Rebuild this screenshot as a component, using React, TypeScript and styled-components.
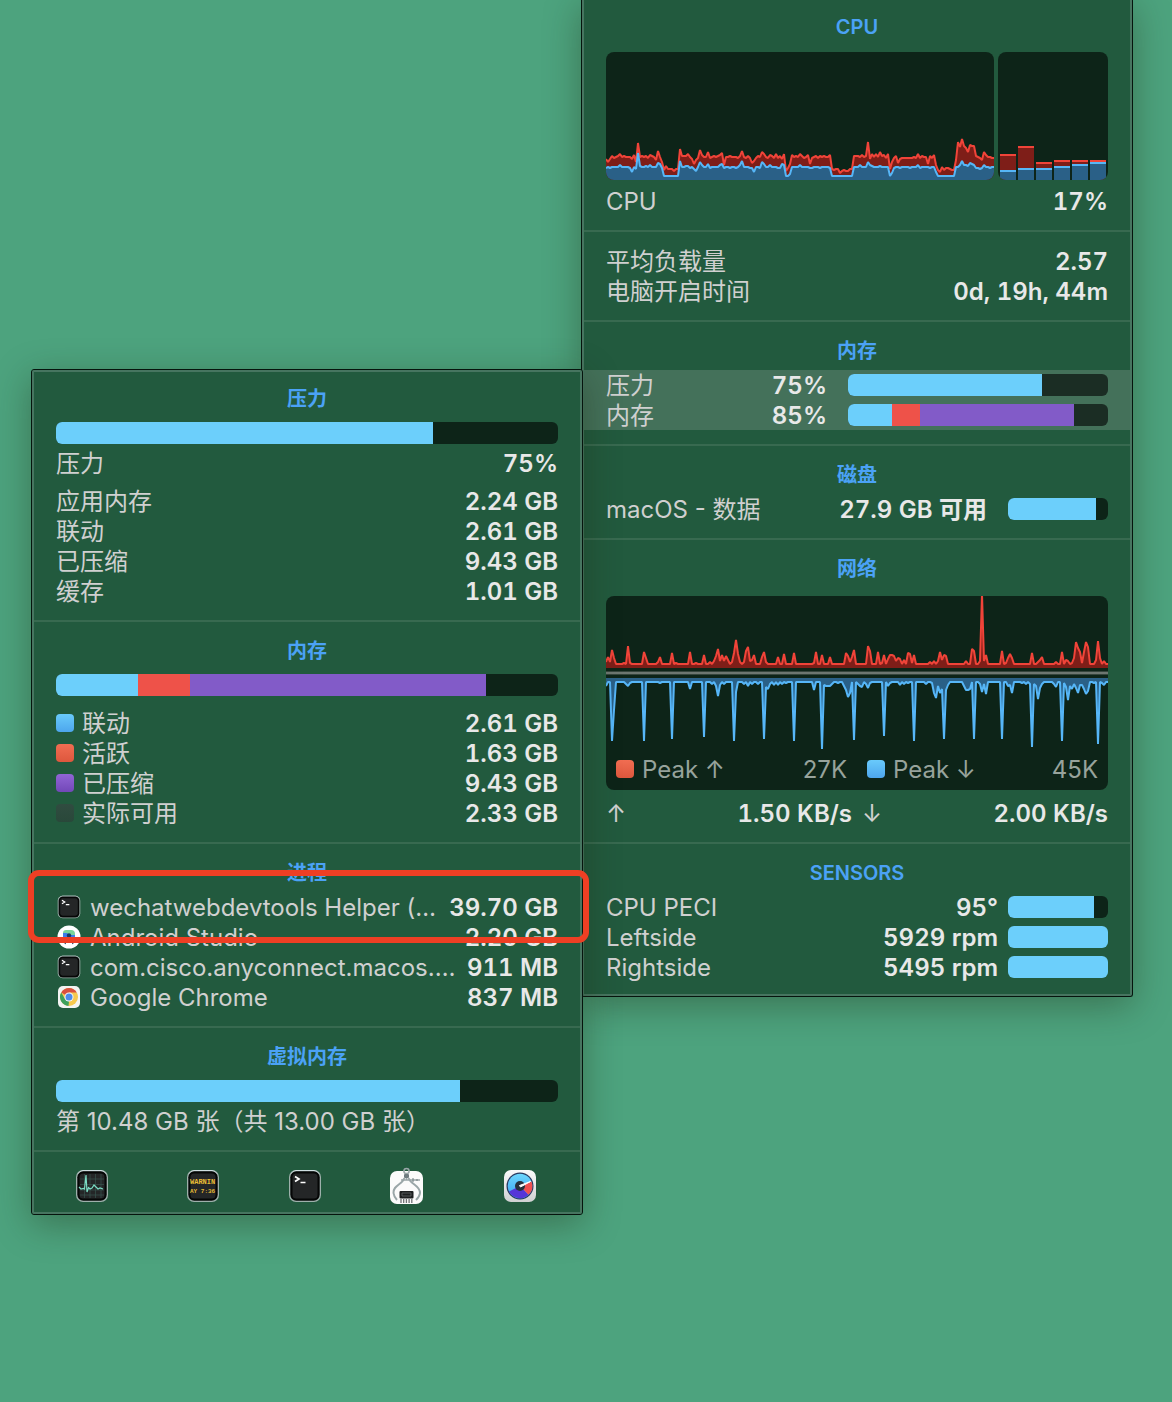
import React from "react";
import styled, { createGlobalStyle } from "styled-components";

const color = {
  desktop: "#4da37e",
  panel: "#225a3e",
  edge: "#477560",
  line: "#386a50",
  well: "rgba(0, 0, 0, 0.6)",
  label: "#d0d0d0",
  value: "#e8e8e8",
  title: "#4ba2f6",
  blue: "#6ccffb",
  red: "#ee5249",
  purple: "#825bc8",
  redLine: "#f04439",
  redFill: "#7e1e18",
  blueLine: "#56b6f7",
  blueFill: "#2a6087",
};

const Global = createGlobalStyle`
  * { box-sizing: border-box; }
  body {
    margin: 0;
    background: ${color.desktop};
    color: ${color.label};
    font: 400 24px/30px Inter, "Noto Sans CJK SC", sans-serif;
  }
`;

const Desktop = styled.main`
  display: flex;
  align-items: flex-start;
  min-height: 100vh;
  padding: 0 31px;
  overflow: hidden;
`;

const Panel = styled.section<{ $docked?: boolean }>`
  position: relative;
  z-index: ${(p) => (p.$docked ? 0 : 1)};
  flex: 0 1 552px;
  min-width: 0;
  margin-top: ${(p) => (p.$docked ? "-2px" : "369px")};
  margin-left: ${(p) => (p.$docked ? "-2px" : "0")};
  border: 1px solid #06140d;
  border-top-width: ${(p) => (p.$docked ? "0" : "1px")};
  border-radius: 3px;
  background: ${color.panel};
  box-shadow: 0 9px 36px rgba(30, 40, 15, 0.38);

  &::after {
    content: "";
    position: absolute;
    inset: 0;
    border: 2px solid ${color.edge};
    border-radius: 2px;
    pointer-events: none;
  }
`;

const Section = styled.section<{ $plain?: boolean }>`
  position: relative;
  padding: ${(p) => (p.$plain ? "14px" : "12px")} 24px 14px;

  & + & {
    border-top: 2px solid ${color.line};
  }
`;

const Title = styled.h2`
  margin: 0 0 4px;
  padding-top: 2px;
  color: ${color.title};
  font-size: 20px;
  font-weight: 600;
  line-height: 30px;
  text-align: center;
`;

const Rows = styled.div<{ $above?: number; $active?: boolean }>`
  margin: ${(p) => p.$above ?? 0}px ${(p) => (p.$active ? "-24px" : "0")} 0;
  padding: 0 ${(p) => (p.$active ? "24px" : "0")};
  background: ${(p) => (p.$active ? "#44715a" : "transparent")};
`;

const Row = styled.div<{ $gap?: number }>`
  display: flex;
  align-items: center;
  gap: ${(p) => p.$gap ?? 8}px;
  height: 30px;
`;

const Name = styled.span`
  flex: 1 1 auto;
  min-width: 0;
  padding-top: 2px;
  overflow: hidden;
  white-space: nowrap;
`;

const Value = styled.span<{ $quiet?: boolean }>`
  flex: none;
  padding-top: 2px;
  color: ${(p) => (p.$quiet ? "inherit" : color.value)};
  font-weight: ${(p) => (p.$quiet ? 400 : 600)};
  font-variant-numeric: ${(p) => (p.$quiet ? "normal" : "tabular-nums")};
  white-space: nowrap;
`;

const Swatch = styled.i<{ $from: string; $to: string }>`
  flex: none;
  width: 18px;
  height: 18px;
  border-radius: 4px;
  background: linear-gradient(${(p) => p.$from}, ${(p) => p.$to});
`;

const Track = styled.div<{ $width?: number }>`
  display: flex;
  flex: none;
  width: ${(p) => (p.$width ? `${p.$width}px` : "100%")};
  height: 22px;
  margin: ${(p) => (p.$width ? "0" : "8px 0 4px")};
  border-radius: 6px;
  overflow: hidden;
  background: ${color.well};
`;

const TitledMeter = styled.div`
  display: flow-root;
  margin-top: -4px;
`;

const Fill = styled.span<{ $tone: string }>`
  background: ${(p) => p.$tone};
`;

const Charts = styled.div`
  display: flex;
  gap: 4px;
  margin: 10px 0 6px;
`;

const Well = styled.div<{ $width?: number }>`
  flex: ${(p) => (p.$width ? `none` : "1 1 0")};
  width: ${(p) => (p.$width ? `${p.$width}px` : "auto")};
  min-width: 0;
  border-radius: 8px;
  overflow: hidden;
  background: ${color.well};
`;

const NetworkWell = styled(Well)`
  margin: 12px 0 8px;
  padding-bottom: 6px;
`;

const Plot = styled.svg`
  display: block;
  width: 100%;
`;

const Pair = styled.div<{ $legend?: boolean }>`
  display: grid;
  grid-template-columns: 1fr 1fr;
  column-gap: ${(p) => (p.$legend ? "20px" : "10px")};
  padding: 0 ${(p) => (p.$legend ? "10px" : "0")};
  color: ${(p) => (p.$legend ? "#97a39c" : color.label)};
`;

const AppIcon = styled.span`
  flex: none;
  display: flex;
  justify-content: center;
  width: 26px;
`;

const Callout = styled.div`
  position: absolute;
  z-index: 1;
  top: 26px;
  left: -4px;
  right: -7px;
  height: 73px;
  border: 6px solid #ee3f24;
  border-radius: 11px;
  pointer-events: none;
`;

const Dock = styled.nav`
  display: grid;
  grid-template-columns: 120fr 102fr 102fr 102fr 124fr;
  justify-items: center;
  align-items: center;
  height: 64px;
  padding-top: 6px;
  border-top: 2px solid ${color.line};
`;

const DockButton = styled.button`
  display: block;
  padding: 0;
  border: 0;
  background: none;
  line-height: 0;
  cursor: pointer;
`;

type Part = { tone: string; share: number };

function Meter({ label, parts, width }: { label: string; parts: Part[]; width?: number }) {
  const total = parts.reduce((sum, p) => sum + p.share, 0);
  return (
    <Track role="meter" aria-label={label} aria-valuemin={0} aria-valuemax={100} aria-valuenow={Math.round(total)} $width={width}>
      {parts.map((p) => (
        <Fill key={p.tone} $tone={p.tone} style={{ width: `${p.share}%` }} />
      ))}
    </Track>
  );
}

// One sample every two pixels, heights measured up from the chart floor.
const cpuTotal = [
  21, 18, 21, 24, 22, 23, 24, 26, 23, 24, 23, 23, 23, 21, 25, 18, 37, 23, 24, 23, 24, 22, 25, 24, 23, 20, 29, 23, 18, 10,
  14, 11, 11, 11, 9, 11, 11, 31, 24, 24, 24, 26, 23, 21, 16, 20, 22, 30, 25, 23, 23, 28, 22, 23, 24, 23, 24, 25, 27, 15,
  23, 23, 24, 23, 23, 23, 22, 24, 29, 23, 22, 24, 22, 17, 19, 22, 24, 23, 28, 26, 23, 22, 25, 24, 22, 26, 22, 24, 21, 26,
  9, 12, 16, 25, 23, 24, 23, 26, 24, 22, 23, 25, 16, 22, 23, 24, 22, 24, 23, 24, 23, 23, 25, 11, 10, 11, 11, 7, 9, 10,
  9, 9, 11, 11, 24, 24, 24, 23, 25, 23, 24, 38, 21, 26, 23, 26, 23, 28, 24, 25, 22, 26, 11, 18, 22, 24, 17, 21, 22, 22,
  22, 22, 22, 22, 23, 22, 26, 22, 24, 23, 23, 16, 24, 22, 25, 15, 10, 8, 13, 10, 12, 12, 11, 10, 10, 20, 38, 33, 41, 34,
  32, 28, 35, 34, 34, 24, 23, 22, 20, 28, 25, 23, 23, 22, 22,
];

const userPeaks: Record<number, number> = {
  0: 12, 7: 15, 13: 8, 15: 11, 16: 27, 17: 14, 20: 14, 22: 15, 26: 17, 27: 16, 28: 12, 37: 19, 40: 14, 41: 14, 44: 11, 45: 9,
  47: 18, 48: 15, 51: 16, 57: 15, 58: 16, 59: 12, 65: 12, 67: 15, 68: 19, 73: 12, 74: 8, 78: 18, 79: 16, 82: 15, 86: 12,
  88: 16, 89: 15, 92: 6, 97: 15, 103: 12, 127: 15, 131: 18, 132: 15, 133: 14, 137: 14, 143: 7, 144: 12, 156: 15, 165: 8,
  177: 15, 178: 19, 179: 15, 180: 15, 181: 14, 182: 17, 183: 16, 184: 15, 185: 12, 186: 12, 187: 11, 188: 12, 189: 15,
};
const idleSpans = [[29, 36], [90, 91], [113, 123], [142, 142], [166, 174]];
const cpuUser = cpuTotal.map((_, i) =>
  idleSpans.some(([a, b]) => i >= a && i <= b) ? 4 : userPeaks[i] ?? (i % 5 === 2 ? 12 : 13),
);

const coreLoads = [
  { total: 26, user: 10 },
  { total: 34, user: 12 },
  { total: 18, user: 12 },
  { total: 20, user: 14 },
  { total: 20, user: 16 },
  { total: 20, user: 18 },
];

const sparse = (peaks: Record<number, number>) => Array.from({ length: 252 }, (_, i) => peaks[i] ?? 4);

const upload = sparse({
  0: 6, 1: 11, 2: 6, 3: 18, 4: 10, 9: 5, 11: 22, 12: 5, 19: 16, 20: 10, 26: 6, 27: 11, 33: 15, 35: 5, 42: 16, 45: 5, 49: 13, 52: 6,
  54: 7, 55: 12, 56: 19, 57: 7, 58: 13, 59: 7, 60: 12, 61: 8, 63: 6, 64: 15, 65: 28, 66: 14, 67: 6, 69: 6, 70: 17, 71: 21,
  72: 7, 73: 8, 74: 13, 78: 11, 79: 16, 80: 6, 86: 11, 89: 14, 94: 15, 104: 5, 105: 16, 108: 13, 112: 11, 120: 15, 121: 12,
  122: 6, 123: 11, 124: 18, 131: 22, 132: 17, 136: 16, 138: 5, 139: 13, 141: 9, 142: 13, 143: 13, 144: 12, 145: 7, 146: 10,
  147: 9, 149: 8, 151: 15, 152: 14, 153: 5, 154: 13, 162: 6, 164: 7, 166: 7, 167: 16, 168: 8, 169: 13, 170: 12, 180: 7,
  183: 19, 184: 17, 187: 7, 188: 74, 189: 7, 190: 13, 198: 17, 200: 5, 201: 10, 202: 14, 203: 10, 213: 15, 216: 6, 217: 8,
  218: 11, 225: 6, 228: 16, 230: 8, 231: 7, 233: 5, 234: 10, 235: 26, 236: 20, 237: 16, 238: 5, 239: 16, 240: 26, 241: 21,
  245: 8, 246: 27, 247: 10, 249: 7,
});

const download = sparse({
  0: 8, 3: 63, 4: 32, 10: 6, 11: 8, 12: 5, 19: 63, 27: 5, 33: 61, 42: 11, 49: 59, 53: 6, 55: 8, 56: 18, 57: 7, 59: 6, 64: 63, 65: 14,
  69: 6, 71: 8, 73: 6, 76: 6, 79: 61, 80: 9, 81: 11, 82: 6, 84: 7, 86: 7, 88: 6, 90: 5, 94: 63, 104: 12, 108: 71, 109: 7, 110: 8,
  111: 8, 112: 8, 113: 6, 116: 5, 119: 8, 120: 12, 121: 19, 122: 15, 124: 62, 126: 6, 127: 8, 128: 9, 130: 6, 131: 10, 132: 5,
  139: 58, 141: 8, 142: 5, 147: 7, 149: 6, 151: 5, 154: 63, 160: 6, 163: 5, 164: 15, 165: 20, 166: 8, 167: 15, 168: 11,
  169: 61, 170: 12, 171: 7, 179: 8, 180: 12, 181: 12, 182: 11, 184: 61, 187: 6, 188: 14, 189: 6, 190: 16, 198: 61, 201: 8,
  202: 7, 203: 15, 208: 5, 210: 6, 212: 6, 213: 69, 214: 6, 215: 8, 216: 21, 217: 10, 218: 6, 224: 6, 225: 9, 228: 63,
  229: 5, 230: 9, 231: 22, 232: 8, 233: 11, 234: 6, 235: 10, 236: 15, 237: 7, 238: 7, 239: 11, 240: 16, 241: 13, 244: 5,
  246: 66, 248: 5, 249: 7,
});

const trace = (data: number[], at: (v: number) => number) => data.map((v, i) => `${i * 2},${at(v)}`).join(" ");

function Area({ data, floor, up, line, fill }: { data: number[]; floor: number; up: boolean; line: string; fill: string }) {
  const points = trace(data, (v) => (up ? floor - v : floor + v));
  return (
    <>
      <polygon points={`0,${floor} ${points} ${(data.length - 1) * 2},${floor}`} fill={fill} />
      <polyline points={points} fill="none" stroke={line} strokeWidth="2" strokeLinejoin="bevel" />
    </>
  );
}

function CpuHistory() {
  return (
    <Plot height="128" viewBox="0 0 388 128" preserveAspectRatio="none" aria-hidden="true">
      <Area data={cpuTotal} floor={128} up line={color.redLine} fill={color.redFill} />
      <Area data={cpuUser} floor={128} up line={color.blueLine} fill={color.blueFill} />
    </Plot>
  );
}

function CoreBars() {
  return (
    <Plot height="128" viewBox="0 0 110 128" preserveAspectRatio="none" aria-hidden="true">
      {coreLoads.map((core, i) => (
        <g key={i} transform={`translate(${2 + i * 18} 0)`}>
          <rect y={128 - core.total} width="16" height={core.total} fill={color.redFill} />
          <rect y={128 - core.total} width="16" height="2" fill={color.redLine} />
          <rect y={128 - core.user} width="16" height={core.user} fill={color.blueFill} />
          <rect y={128 - core.user} width="16" height="2" fill={color.blueLine} />
        </g>
      ))}
    </Plot>
  );
}

function NetworkHistory() {
  return (
    <Plot height="158" viewBox="0 0 502 158" preserveAspectRatio="none" aria-hidden="true">
      <Area data={upload} floor={72} up line={color.redLine} fill={color.redFill} />
      <rect y="75" width="502" height="4" fill="#35453c" />
      <rect y="76" width="502" height="2" fill="#6d7771" />
      <Area data={download} floor={82} up={false} line={color.blueLine} fill={color.blueFill} />
    </Plot>
  );
}

function DarkTile({ children }: { children?: React.ReactNode }) {
  return (
    <>
      <rect x="1" y="1" width="32" height="32" rx="7" fill="#9eb0ab" />
      <path d="M3 5Q5 1.600 8 1.600H26Q29 1.600 31 5" fill="none" stroke="#d5e4e8" />
      <rect x="2.300" y="2.300" width="29.400" height="29.400" rx="6" fill="#050606" />
      <rect x="4.500" y="4.500" width="25" height="25" rx="3.500" fill="#242627" />
      {children}
    </>
  );
}

function TerminalIcon({ size }: { size: number }) {
  return (
    <svg width={size} height={size} viewBox="0 0 34 34" aria-hidden="true">
      <DarkTile>
        <path d="M7 7.500L11 10L7 12.500M12.500 13.500H17.500" fill="none" stroke="#fff" strokeWidth="1.700" />
      </DarkTile>
    </svg>
  );
}

function AndroidStudioIcon() {
  return (
    <svg width="24" height="24" viewBox="0 0 24 24" aria-hidden="true">
      <circle cx="12" cy="12" r="11.500" fill="#fff" />
      <path d="M6 8Q6 5 9 5H14Q18 5 18 9V11H6Z" fill="#79d59a" />
      <path d="M6 8H10L12 10H18V15H6Z" fill="#3d7de8" />
      <circle cx="12" cy="10.500" r="2.200" fill="#173b68" />
      <path d="M11 12L8 19M13 12L16 19" fill="none" stroke="#25405d" strokeWidth="1.200" />
    </svg>
  );
}

function ChromeIcon() {
  return (
    <svg width="22" height="22" viewBox="0 0 22 22" aria-hidden="true">
      <rect width="22" height="22" rx="5" fill="#f3f3f2" />
      <circle cx="11" cy="11" r="9" fill="#f6c84e" />
      <path d="M11 11L3.200 6.500A9 9 0 0 1 18.800 6.500H11Z" fill="#d9503f" />
      <path d="M3.200 6.500L7.100 13.300L11 15.500L10.500 20A9 9 0 0 1 3.200 6.500Z" fill="#3ea05c" />
      <circle cx="11" cy="11" r="4.500" fill="#f4f6f8" />
      <circle cx="11" cy="11" r="3.500" fill="#4d8bea" />
    </svg>
  );
}

function ActivityIcon() {
  return (
    <svg width="34" height="34" viewBox="0 0 34 34" aria-hidden="true">
      <DarkTile>
        <path d="M9.500 5V29M15 5V29M20.500 5V29M26 5V29M5 10H29M5 15.500H29M5 21H29M5 26H29" stroke="#38534d" strokeWidth=".7" />
        <path d="M4 18L6 20L8.500 19.500L9.500 20L11 6L12 23L13.500 18.500L15 20L17 19L19 16L21 18L23 20L25 19L28 20" fill="none" stroke="#7bdcc4" strokeWidth="1.200" />
      </DarkTile>
    </svg>
  );
}

function ConsoleIcon() {
  return (
    <svg width="34" height="34" viewBox="0 0 34 34" aria-hidden="true">
      <DarkTile>
        <g fill="#e9bd35" fontFamily="Liberation Mono, monospace" fontWeight="700">
          <text x="4" y="15" fontSize="7">WARNIN</text>
          <text x="4" y="24" fontSize="6">AY 7:36</text>
        </g>
      </DarkTile>
    </svg>
  );
}

function SystemInfoIcon() {
  return (
    <svg width="36" height="38" viewBox="0 0 36 38" aria-hidden="true">
      <rect x="1" y="4" width="33" height="33" rx="7" fill="#fbfbfb" />
      <g fill="none" stroke="#9aa6a8">
        <circle cx="17.500" cy="4" r="2.600" strokeWidth="1.500" />
        <path d="M15.500 11C13 18 4 18 4.500 26Q5 30 8 33M19.500 11C22 18 31 18 31 26Q30.500 30 27 33" strokeWidth="2" />
        <path d="M12 13H31M17.500 6V13" strokeWidth="1.500" />
      </g>
      <rect x="15" y="7" width="5" height="4" rx="1" fill="#6e7c80" />
      <path d="M24 11V15M28 12V14" stroke="#6e7c80" />
      <rect x="10.500" y="24" width="14" height="7.500" rx="1" fill="#1d1f20" />
      <path d="M13 26H22V29H13Z" fill="none" stroke="#6b6f70" strokeWidth=".7" />
      <path d="M12 32V36M14.700 32V36M17.400 32V36M20.100 32V36M22.800 32V36" stroke="#6f7274" strokeWidth="1.300" />
    </svg>
  );
}

function StatsIcon() {
  return (
    <svg width="34" height="34" viewBox="0 0 34 34" aria-hidden="true">
      <defs>
        <linearGradient id="stats-tile" x2="0" y2="1">
          <stop stopColor="#fafafa" />
          <stop offset="1" stopColor="#cfd1d2" />
        </linearGradient>
        <linearGradient id="stats-blue" x2="0" y2="1">
          <stop stopColor="#6ed7fc" />
          <stop offset="1" stopColor="#37a2f4" />
        </linearGradient>
      </defs>
      <rect x="1" y="1" width="32" height="32" rx="7" fill="url(#stats-tile)" />
      <circle cx="17" cy="17" r="13.500" fill="#27395f" />
      <circle cx="17" cy="17" r="12.300" fill="url(#stats-blue)" />
      <path d="M17 17L6 22.500A12.300 12.300 0 0 0 25.500 25.800Z" fill="#5535d8" />
      <path d="M17 17L28.500 12.500A12.300 12.300 0 0 1 25.500 25.800Z" fill="#f05050" />
      <circle cx="17" cy="17" r="5" fill="#26313d" />
      <path d="M16.500 16.500L27.500 12.500L17.500 18Z" fill="#fff" stroke="#fff" />
    </svg>
  );
}

const Line = ({ name, value }: { name: string; value: string }) => (
  <Row>
    <Name>{name}</Name>
    <Value>{value}</Value>
  </Row>
);

const memoryLegend = [
  { name: "联动", value: "2.61 GB", from: "#69cafb", to: "#4da6ed" },
  { name: "活跃", value: "1.63 GB", from: "#f16d52", to: "#dd573d" },
  { name: "已压缩", value: "9.43 GB", from: "#9165d5", to: "#7248b8" },
  { name: "实际可用", value: "2.33 GB", from: "#304c40", to: "#29483a" },
];

const processes = [
  { name: "wechatwebdevtools Helper (…", value: "39.70 GB", icon: <TerminalIcon size={24} /> },
  { name: "Android Studio", value: "2.20 GB", icon: <AndroidStudioIcon /> },
  { name: "com.cisco.anyconnect.macos.…", value: "911 MB", icon: <TerminalIcon size={24} /> },
  { name: "Google Chrome", value: "837 MB", icon: <ChromeIcon /> },
];

const tools = [
  { name: "Activity Monitor", icon: <ActivityIcon /> },
  { name: "Console", icon: <ConsoleIcon /> },
  { name: "Terminal", icon: <TerminalIcon size={34} /> },
  { name: "System Information", icon: <SystemInfoIcon /> },
  { name: "iStat Menus", icon: <StatsIcon /> },
];

const sensors = [
  { name: "CPU PECI", value: "95°", share: 86 },
  { name: "Leftside", value: "5929 rpm", share: 100 },
  { name: "Rightside", value: "5495 rpm", share: 100 },
];

function MemoryPanel() {
  return (
    <Panel>
      <Section>
        <Title>压力</Title>
        <TitledMeter>
          <Meter label="压力" parts={[{ tone: color.blue, share: 75 }]} />
        </TitledMeter>
        <Line name="压力" value="75%" />
        <Rows $above={8}>
          <Line name="应用内存" value="2.24 GB" />
          <Line name="联动" value="2.61 GB" />
          <Line name="已压缩" value="9.43 GB" />
          <Line name="缓存" value="1.01 GB" />
        </Rows>
      </Section>
      <Section>
        <Title>内存</Title>
        <TitledMeter>
          <Meter
            label="内存"
            parts={[
              { tone: color.blue, share: 16.4 },
              { tone: color.red, share: 10.3 },
              { tone: color.purple, share: 59 },
            ]}
          />
        </TitledMeter>
        <Rows $above={8}>
          {memoryLegend.map((m) => (
            <Row key={m.name}>
              <Swatch $from={m.from} $to={m.to} />
              <Name>{m.name}</Name>
              <Value>{m.value}</Value>
            </Row>
          ))}
        </Rows>
      </Section>
      <Section>
        <Title>进程</Title>
        {processes.map((p) => (
          <Row key={p.name}>
            <AppIcon>{p.icon}</AppIcon>
            <Name>{p.name}</Name>
            <Value>{p.value}</Value>
          </Row>
        ))}
        <Callout />
      </Section>
      <Section>
        <Title>虚拟内存</Title>
        <TitledMeter>
          <Meter label="虚拟内存" parts={[{ tone: color.blue, share: 80.5 }]} />
        </TitledMeter>
        <Row>
          <Name>第 10.48 GB 张（共 13.00 GB 张）</Name>
        </Row>
      </Section>
      <Dock>
        {tools.map((t) => (
          <DockButton key={t.name} type="button" aria-label={t.name}>
            {t.icon}
          </DockButton>
        ))}
      </Dock>
    </Panel>
  );
}

function OverviewPanel() {
  return (
    <Panel $docked>
      <Section>
        <Title>CPU</Title>
        <Charts>
          <Well>
            <CpuHistory />
          </Well>
          <Well $width={110}>
            <CoreBars />
          </Well>
        </Charts>
        <Line name="CPU" value="17%" />
      </Section>
      <Section $plain>
        <Line name="平均负载量" value="2.57" />
        <Line name="电脑开启时间" value="0d, 19h, 44m" />
      </Section>
      <Section>
        <Title>内存</Title>
        <Rows $active>
          <Row $gap={21}>
            <Name>压力</Name>
            <Value>75%</Value>
            <Meter label="压力" width={260} parts={[{ tone: color.blue, share: 74.6 }]} />
          </Row>
          <Row $gap={21}>
            <Name>内存</Name>
            <Value>85%</Value>
            <Meter
              label="内存"
              width={260}
              parts={[
                { tone: color.blue, share: 17 },
                { tone: color.red, share: 10.7 },
                { tone: color.purple, share: 59.2 },
              ]}
            />
          </Row>
        </Rows>
      </Section>
      <Section>
        <Title>磁盘</Title>
        <Row $gap={21}>
          <Name>macOS - 数据</Name>
          <Value>27.9 GB 可用</Value>
          <Meter label="macOS - 数据" width={100} parts={[{ tone: color.blue, share: 88 }]} />
        </Row>
      </Section>
      <Section>
        <Title>网络</Title>
        <NetworkWell>
          <NetworkHistory />
          <Pair $legend>
            <Row>
              <Swatch $from="#f16d52" $to="#dd573d" />
              <Name>Peak ↑</Name>
              <Value $quiet>27K</Value>
            </Row>
            <Row>
              <Swatch $from="#69cafb" $to="#4da6ed" />
              <Name>Peak ↓</Name>
              <Value $quiet>45K</Value>
            </Row>
          </Pair>
        </NetworkWell>
        <Pair>
          <Line name="↑" value="1.50 KB/s" />
          <Line name="↓" value="2.00 KB/s" />
        </Pair>
      </Section>
      <Section>
        <Title>SENSORS</Title>
        {sensors.map((s) => (
          <Row key={s.name} $gap={10}>
            <Name>{s.name}</Name>
            <Value>{s.value}</Value>
            <Meter label={s.name} width={100} parts={[{ tone: color.blue, share: s.share }]} />
          </Row>
        ))}
      </Section>
    </Panel>
  );
}

export default function App() {
  return (
    <>
      <Global />
      <Desktop>
        <MemoryPanel />
        <OverviewPanel />
      </Desktop>
    </>
  );
}
